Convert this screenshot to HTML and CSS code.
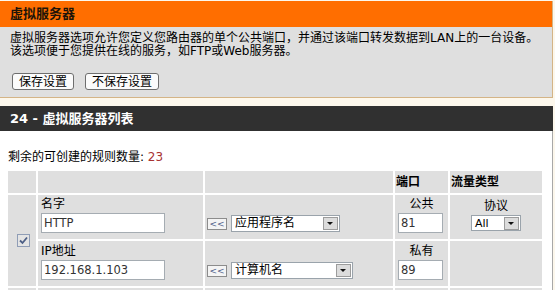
FILE: index.html
```html
<!DOCTYPE html>
<html lang="zh-CN">

<head>
    <meta charset="UTF-8">
    <title>虚拟服务器</title>
    <link rel="stylesheet" href="styles.css">
</head>

<body>

    <div class="page">
        <!-- 上部：说明和保存按钮 -->
        <div class="box-top">
            <div class="title-orange">虚拟服务器</div>
            <div class="top-body">
                <p class="desc">虚拟服务器选项允许您定义您路由器的单个公共端口，并通过该端口转发数据到LAN上的一台设备。<br>该选项便于您提供在线的服务，如FTP或Web服务器。</p>
                <div class="btn-row">
                    <button class="btn">保存设置</button>
                    <button class="btn">不保存设置</button>
                </div>
            </div>
        </div>

        <!-- 下部：规则列表 -->
        <div class="box-list">
            <div class="title-dark">24 - 虚拟服务器列表</div>
            <div class="list-body">
                <p class="remain">剩余的可创建的规则数量: <span class="count">23</span></p>

                <table class="rules">
                    <colgroup>
                        <col class="c-check">
                        <col class="c-name">
                        <col class="c-pick">
                        <col class="c-port">
                        <col class="c-type">
                    </colgroup>
                    <tr class="head">
                        <td></td>
                        <td></td>
                        <td></td>
                        <td>端口</td>
                        <td>流量类型</td>
                    </tr>
                    <tr class="row-a">
                        <td class="cell-check" rowspan="2"><span class="check"><svg width="9" height="9" viewBox="0 0 9 9"><path d="M1 4.5 L3.5 7 L8 1.5" fill="none" stroke="#4d5f86" stroke-width="1.8"/></svg></span></td>
                        <td class="cell-field">
                            <div class="lbl">名字</div>
                            <input class="txt txt-name" type="text" value="HTTP">
                        </td>
                        <td class="cell-pick">
                            <div class="pick">
                                <span class="mini-btn">&lt;&lt;</span>
                                <span class="select sel-app"><span class="sel-text">应用程序名</span><span class="arrow"></span></span>
                            </div>
                        </td>
                        <td class="cell-port">
                            <div class="lbl center">公共</div>
                            <input class="txt txt-port" type="text" value="81">
                        </td>
                        <td class="cell-proto">
                            <div class="lbl">协议</div>
                            <div class="proto">
                                <span class="select sel-proto"><span class="sel-text latin">All</span><span class="arrow"></span></span>
                            </div>
                        </td>
                    </tr>
                    <tr class="row-b">
                        <td class="cell-field">
                            <div class="lbl">IP地址</div>
                            <input class="txt txt-name" type="text" value="192.168.1.103">
                        </td>
                        <td class="cell-pick">
                            <div class="pick">
                                <span class="mini-btn">&lt;&lt;</span>
                                <span class="select sel-pc"><span class="sel-text">计算机名</span><span class="arrow"></span></span>
                            </div>
                        </td>
                        <td class="cell-port">
                            <div class="lbl center">私有</div>
                            <input class="txt txt-port" type="text" value="89">
                        </td>
                        <td></td>
                    </tr>
                    <tr class="row-next">
                        <td></td>
                        <td></td>
                        <td></td>
                        <td></td>
                        <td></td>
                    </tr>
                </table>
            </div>
        </div>
    </div>

</body>

</html>
```

FILE: styles.css
```css
body {
    margin: 0;
    background-color: #fcf7ec;
    font-family: "DejaVu Sans", "Noto Sans CJK SC", sans-serif;
    font-size: 12px;
    color: #000;
}

.page {
    width: 553px;
    padding-top: 1px;
}

/* 上部 */
.box-top {
    background-color: #dfdfdf;
    border-right: 1px solid #d4b486;
    border-bottom: 1px solid #d4b486;
}

.title-orange {
    height: 26px;
    line-height: 26px;
    padding-left: 10px;
    background-color: #ff6e00;
    color: #1e1408;
    font-size: 13px;
    font-weight: bold;
}

.top-body {
    height: 70px;
    padding-left: 10px;
    box-sizing: border-box;
    padding-top: 5px;
}

.desc {
    margin: 0;
    line-height: 12.5px;
}

.btn-row {
    display: flex;
    gap: 11px;
    margin-top: 16px;
    padding-left: 2px;
}

.btn {
    height: 17px;
    padding: 0 6px;
    font-family: inherit;
    font-size: 12px;
    line-height: 14px;
    background-color: #fbfbfb;
    border: 1px solid #6e6e6e;
    border-radius: 3px;
    color: #000;
}

/* 下部 */
.box-list {
    margin-top: 8px;
}

.title-dark {
    height: 25px;
    line-height: 25px;
    padding-left: 10px;
    background-color: #303030;
    color: #fff;
    font-size: 13px;
    font-weight: bold;
}

.list-body {
    background-color: #fff;
    border-right: 1px solid #a8a8a8;
    height: 160px;
}

.remain {
    margin: 0;
    padding: 20px 0 0 8px;
    line-height: 12px;
}

.count {
    color: #a83232;
}

.rules {
    margin: 6px 0 0 6px;
    table-layout: fixed;
    border-spacing: 2px;
}

.c-check { width: 28px; }
.c-name { width: 165px; }
.c-pick { width: 188px; }
.c-port { width: 53px; }
.c-type { width: 92px; }

.rules td {
    background-color: #dfdfdf;
    padding: 0;
    line-height: 12px;
}

.head { height: 22px; }
.row-a { height: 44px; }
.row-b { height: 45px; }
.row-next { height: 20px; }

.head td {
    padding-left: 1px;
    font-weight: bold;
}

.rules .cell-field,
.rules .cell-port {
    vertical-align: bottom;
    padding: 0 0 6px 3px;
}

.rules .cell-proto {
    vertical-align: bottom;
    padding: 0 0 8px 0;
}

.rules .cell-pick {
    vertical-align: bottom;
    padding: 0 0 7px 2px;
}

.rules .cell-check {
    vertical-align: middle;
    padding-left: 2px;
}

.lbl {
    height: 18px;
    line-height: 18px;
}

.lbl.center,
.cell-proto .lbl {
    text-align: center;
}

.lbl.center {
    padding-right: 3px;
}

.txt {
    display: block;
    box-sizing: border-box;
    height: 20px;
    margin: 0;
    padding: 0 2px;
    border: 1px solid #a5acb2;
    background-color: #fff;
    font-family: "DejaVu Sans", sans-serif;
    font-size: 11.5px;
    color: #333;
}

.txt-name { width: 124px; }
.txt-port { width: 45px; }

.pick {
    display: flex;
    align-items: center;
    gap: 4px;
    height: 17px;
}

.proto {
    display: flex;
    justify-content: center;
}

.mini-btn {
    display: block;
    width: 20px;
    height: 12px;
    box-sizing: border-box;
    border: 1px solid #8c8c8c;
    background-color: #f4f4f4;
    color: #51618a;
    font-size: 9px;
    line-height: 10px;
    text-align: center;
}

.select {
    display: flex;
    justify-content: space-between;
    align-items: center;
    box-sizing: border-box;
    height: 17px;
    border: 1px solid #9aa3ab;
    background-color: #fff;
}

.sel-app { width: 109px; }
.sel-pc { width: 122px; }
.sel-proto { width: 50px; height: 16px; }

.sel-text {
    padding-left: 3px;
    line-height: 15px;
    white-space: nowrap;
}

.sel-text.latin {
    font-size: 11px;
}

.arrow {
    position: relative;
    width: 15px;
    height: 13px;
    margin-right: 1px;
    box-sizing: border-box;
    border: 1px solid #9c9c9c;
    background-color: #dcdcdc;
}

/* 下拉小三角 */
.arrow::after {
    content: "";
    position: absolute;
    left: 3px;
    top: 4px;
    border-left: 3px solid transparent;
    border-right: 3px solid transparent;
    border-top: 3px solid #111;
}

.check {
    display: flex;
    align-items: center;
    justify-content: center;
    width: 13px;
    height: 13px;
    margin: 0 auto;
    box-sizing: border-box;
    border: 1px solid #8f9db6;
    background-color: #e4e4e4;
}
```
